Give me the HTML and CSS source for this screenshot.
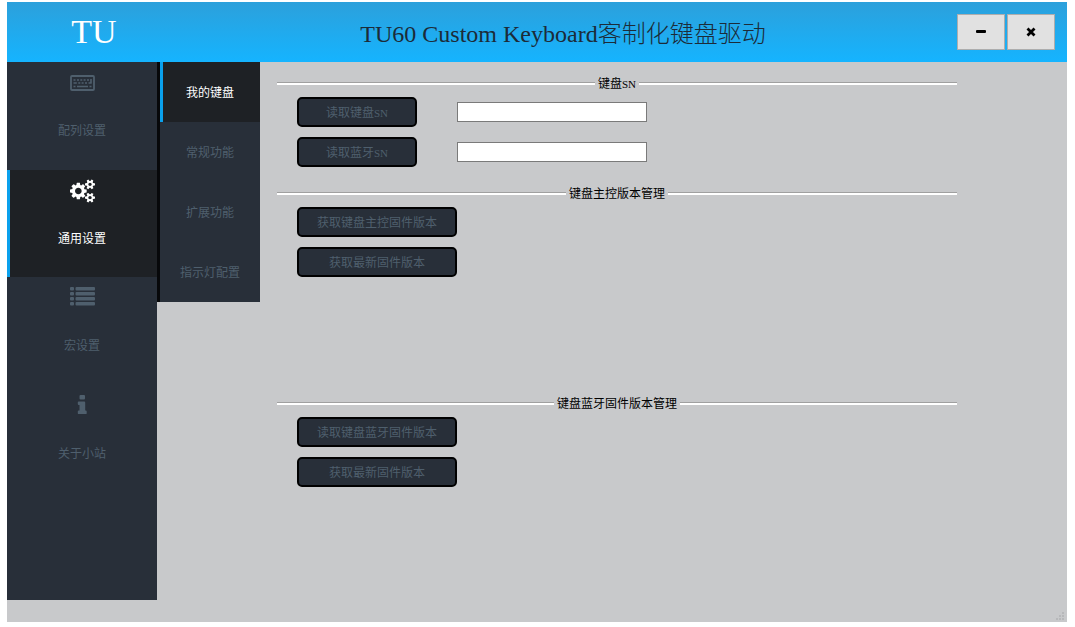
FILE: index.html
```html
<!DOCTYPE html>
<html lang="zh-CN">
<head>
<meta charset="utf-8">
<title>TU60 Custom Keyboard客制化键盘驱动</title>
<link rel="stylesheet" href="styles.css">
</head>
<body>
<div class="window">
  <header class="titlebar">
    <div class="logo">TU</div>
    <h1 class="title"><span class="title-latin">TU60 Custom Keyboard</span>客制化键盘驱动</h1>
    <div class="controls">
      <button class="control" type="button" aria-label="最小化">
        <svg width="12" height="12" viewBox="0 0 12 12"><rect x="1" y="4" width="10" height="3" rx="1"/></svg>
      </button>
      <button class="control" type="button" aria-label="关闭">
        <svg width="12" height="12" viewBox="0 0 12 12"><path d="M2.500 2.500L9.500 9.500M9.500 2.500L2.500 9.500" stroke="#000" stroke-width="2.800"/></svg>
      </button>
    </div>
  </header>

  <div class="body">
    <nav class="sidebar">
      <div class="sidebar-items">
        <button class="side-item" type="button">
          <svg class="icon" viewBox="0 0 25 24">
            <rect x="1" y="5" width="23" height="14" rx="1" fill="none" stroke="currentColor" stroke-width="1.8"/>
            <path d="M3.5 9h2M7 9h2M10.3 9h2M13.6 9h2M17 9h2M3.5 12h3.300M8.300 12h2M11.600 12h2M15 12h2M3.500 15.500h2M7 15.500h11M19.500 15.500h2M18.500 12h3M21 8v4.500" fill="none" stroke="currentColor" stroke-width="1.600"/>
          </svg>
          <span>配列设置</span>
        </button>
        <button class="side-item active" type="button">
          <svg class="icon" viewBox="0 0 1920 1792"><path fill="currentColor" d="M896 896q0-106-75-181t-181-75-181 75-75 181 75 181 181 75 181-75 75-181zm768 512q0-52-38-90t-90-38-90 38-38 90q0 53 37.500 90.500t90.500 37.500 90.500-37.500 37.500-90.500zm0-1024q0-52-38-90t-90-38-90 38-38 90q0 53 37.500 90.500t90.500 37.500 90.500-37.500 37.500-90.500zm-384 421v185q0 10-7 19.500t-16 10.500l-155 24q-11 35-32 76 34 48 90 115 7 11 7 20 0 12-7 19-23 30-82.500 89.500t-78.500 59.500q-11 0-21-7l-115-90q-37 19-77 31-11 108-23 155-7 24-30 24h-186q-11 0-20-7.500t-10-17.500l-23-153q-34-10-75-31l-118 89q-7 7-20 7-11 0-21-8-144-133-144-160 0-9 7-19 10-14 41-53t47-61q-23-44-35-82l-152-24q-10-1-17-9.500t-7-19.500v-185q0-10 7-19.500t16-10.500l155-24q11-35 32-76-34-48-90-115-7-11-7-20 0-12 7-20 22-30 82-89t79-59q11 0 21 7l115 90q34-18 77-32 11-108 23-154 7-24 30-24h186q11 0 20 7.500t10 17.500l23 153q34 10 75 31l118-89q8-7 20-7 11 0 21 8 144 133 144 160 0 8-7 19-12 16-42 54t-45 60q23 48 34 82l152 23q10 2 17 10.500t7 19.500zm640 533v140q0 16-149 31-12 27-30 52 51 113 51 138 0 4-4 7-122 71-124 71-8 0-46-47t-52-68q-20 2-30 2t-30-2q-14 21-52 68t-46 47q-2 0-124-71-4-3-4-7 0-25 51-138-18-25-30-52-149-15-149-31v-140q0-16 149-31 13-29 30-52-51-113-51-138 0-4 4-7 4-2 35-20t59-34 30-16q8 0 46 46.500t52 67.500q20-2 30-2t30 2q51-71 92-112l6-2q4 0 124 70 4 3 4 7 0 25-51 138 17 23 30 52 149 15 149 31zm0-1024v140q0 16-149 31-12 27-30 52 51 113 51 138 0 4-4 7-122 71-124 71-8 0-46-47t-52-68q-20 2-30 2t-30-2q-14 21-52 68t-46 47q-2 0-124-71-4-3-4-7 0-25 51-138-18-25-30-52-149-15-149-31v-140q0-16 149-31 13-29 30-52-51-113-51-138 0-4 4-7 4-2 35-20t59-34 30-16q8 0 46 46.500t52 67.500q20-2 30-2t30 2q51-71 92-112l6-2q4 0 124 70 4 3 4 7 0 25-51 138 17 23 30 52 149 15 149 31z"/></svg>
          <span>通用设置</span>
        </button>
        <button class="side-item" type="button">
          <svg class="icon" viewBox="0 0 25 24" fill="currentColor">
            <rect x="0" y="1" width="4" height="3.500" rx="1"/><rect x="5.500" y="1" width="19.500" height="3.500" rx="1"/>
            <rect x="0" y="6" width="4" height="3.500" rx="1"/><rect x="5.500" y="6" width="19.500" height="3.500" rx="1"/>
            <rect x="0" y="11" width="4" height="3.500" rx="1"/><rect x="5.500" y="11" width="19.500" height="3.500" rx="1"/>
            <rect x="0" y="16" width="4" height="3.500" rx="1"/><rect x="5.500" y="16" width="19.500" height="3.500" rx="1"/>
          </svg>
          <span>宏设置</span>
        </button>
        <button class="side-item" type="button">
          <svg class="icon" viewBox="0 0 25 24" fill="currentColor">
            <rect x="9.500" y="1" width="5.500" height="4.500" rx="1"/>
            <path d="M8.700 7.500h5.600q.9 0 .9.900v8.100h.6q.9 0 .9.900v1.800q0 .9-.9.900H8.700q-.9 0-.9-.9v-1.800q0-.9.900-.9h.8v-5.500h-.8q-.9 0-.9-.9v-1.700q0-.9.900-.9z"/>
          </svg>
          <span>关于小站</span>
        </button>
      </div>
    </nav>

    <nav class="submenu">
      <button class="sub-item active" type="button">我的键盘</button>
      <button class="sub-item" type="button">常规功能</button>
      <button class="sub-item" type="button">扩展功能</button>
      <button class="sub-item" type="button">指示灯配置</button>
    </nav>

    <main class="content">
      <fieldset class="group">
        <legend class="legend"><span>键盘<span class="latin">SN</span></span></legend>
        <div class="rows">
          <div class="row">
            <button class="action short" id="read-keyboard" type="button">读取键盘<span class="latin">SN</span></button>
            <input class="field" type="text" aria-labelledby="read-keyboard">
          </div>
          <div class="row">
            <button class="action short" id="read-bluetooth" type="button">读取蓝牙<span class="latin">SN</span></button>
            <input class="field" type="text" aria-labelledby="read-bluetooth">
          </div>
        </div>
      </fieldset>
      <fieldset class="group tall">
        <legend class="legend"><span>键盘主控版本管理</span></legend>
        <div class="rows">
          <button class="action" type="button">获取键盘主控固件版本</button>
          <button class="action" type="button">获取最新固件版本</button>
        </div>
      </fieldset>
      <fieldset class="group">
        <legend class="legend"><span>键盘蓝牙固件版本管理</span></legend>
        <div class="rows">
          <button class="action" type="button">读取键盘蓝牙固件版本</button>
          <button class="action" type="button">获取最新固件版本</button>
        </div>
      </fieldset>
    </main>
  </div>

  <footer class="statusbar">
    <svg width="8" height="8" viewBox="0 0 8 8" fill="#b7b8ba"><path d="M6 0h2v2h-2zM3 3h2v2h-2zM6 3h2v2h-2zM0 6h2v2h-2zM3 6h2v2h-2zM6 6h2v2h-2z"/></svg>
  </footer>
</div>
</body>
</html>
```
FILE: styles.css
```css
* {
  box-sizing: border-box;
}

body {
  margin: 0;
  min-height: 100vh;
  padding: 2px 8px 5px 7px;
  display: flex;
  background: #fff;
  font: 12px/20px "Liberation Sans", "Noto Sans CJK SC", sans-serif;
  color: #000;
}

button {
  margin: 0;
  padding: 0;
  border: 0;
  font: inherit;
  color: inherit;
}

.window {
  flex: 1;
  display: flex;
  flex-direction: column;
  background: #c8c9cb;
}

.titlebar {
  height: 60px;
  display: flex;
  align-items: center;
  padding: 0 12px;
  background: linear-gradient(#2ca0db, #15b4ff);
}

.logo {
  width: 150px;
  text-align: center;
  font: 34px/60px "Liberation Serif", serif;
  color: #fff;
}

.title {
  flex: 1;
  margin: 0;
  text-align: center;
  white-space: nowrap;
  font: 300 24px/60px "Noto Sans CJK SC", sans-serif;
  color: #1c2b38;
}

.title-latin {
  font: 24px/24px "Liberation Serif", serif;
}

.controls {
  display: flex;
  gap: 2px;
}

.control {
  width: 48px;
  height: 36px;
  display: flex;
  align-items: center;
  justify-content: center;
  border: 1px solid #adadad;
  background: #e1e1e1;
}

.body {
  flex: 1;
  display: flex;
  align-items: flex-start;
}

.sidebar {
  align-self: stretch;
  width: 150px;
  background: #282f39;
}

.sidebar-items {
  height: 430px;
  display: grid;
  grid-template-rows: repeat(4, 1fr);
}

.side-item {
  display: flex;
  flex-direction: column;
  align-items: center;
  gap: 26px;
  padding: 9px 3px 0;
  background: #282f39;
  color: #4f5f6d;
}

.icon {
  width: 25px;
  height: 24px;
}

.submenu {
  width: 103px;
  border-left: 3px solid #07080a;
  display: flex;
  flex-direction: column;
}

.sub-item {
  height: 60px;
  padding-top: 2px;
  background: #282f39;
  color: #4f5f6d;
}

.side-item.active,
.sub-item.active {
  background: #1e2125;
  box-shadow: inset 3px 0 #0aa1ed;
  color: #fff;
}

.content {
  flex: 1;
  padding: 12px 110px 0 17px;
}

.group {
  min-width: 0;
  min-height: 110px;
  margin: 0;
  padding: 0;
  border: 0;
}

.group.tall {
  min-height: 210px;
}

.legend {
  width: 100%;
  padding: 0;
  display: flex;
  align-items: center;
  gap: 3px;
}

.legend::before,
.legend::after {
  content: "";
  flex: 1;
  height: 2px;
  margin-bottom: 2px;
  border-top: 1px solid #a0a0a0;
  background: #fff;
}

.latin {
  font: 11px/12px "Liberation Serif", serif;
}

.rows {
  display: flex;
  flex-direction: column;
  align-items: flex-start;
  gap: 10px;
  padding: 3px 0 0 20px;
}

.row {
  display: flex;
  align-items: center;
  gap: 40px;
}

.action {
  width: 160px;
  height: 30px;
  padding-top: 2px;
  border: 2px solid #000;
  border-radius: 5px;
  background: #282f39;
  color: #4f5f6d;
}

.action.short {
  width: 120px;
}

.field {
  width: 190px;
  height: 20px;
  padding: 0 3px;
  border: 1px solid #7a7a7a;
  background: #fff;
  font: inherit;
}

.statusbar {
  height: 22px;
  padding: 0 3px 2px 0;
  display: flex;
  align-items: flex-end;
  justify-content: flex-end;
}
```
